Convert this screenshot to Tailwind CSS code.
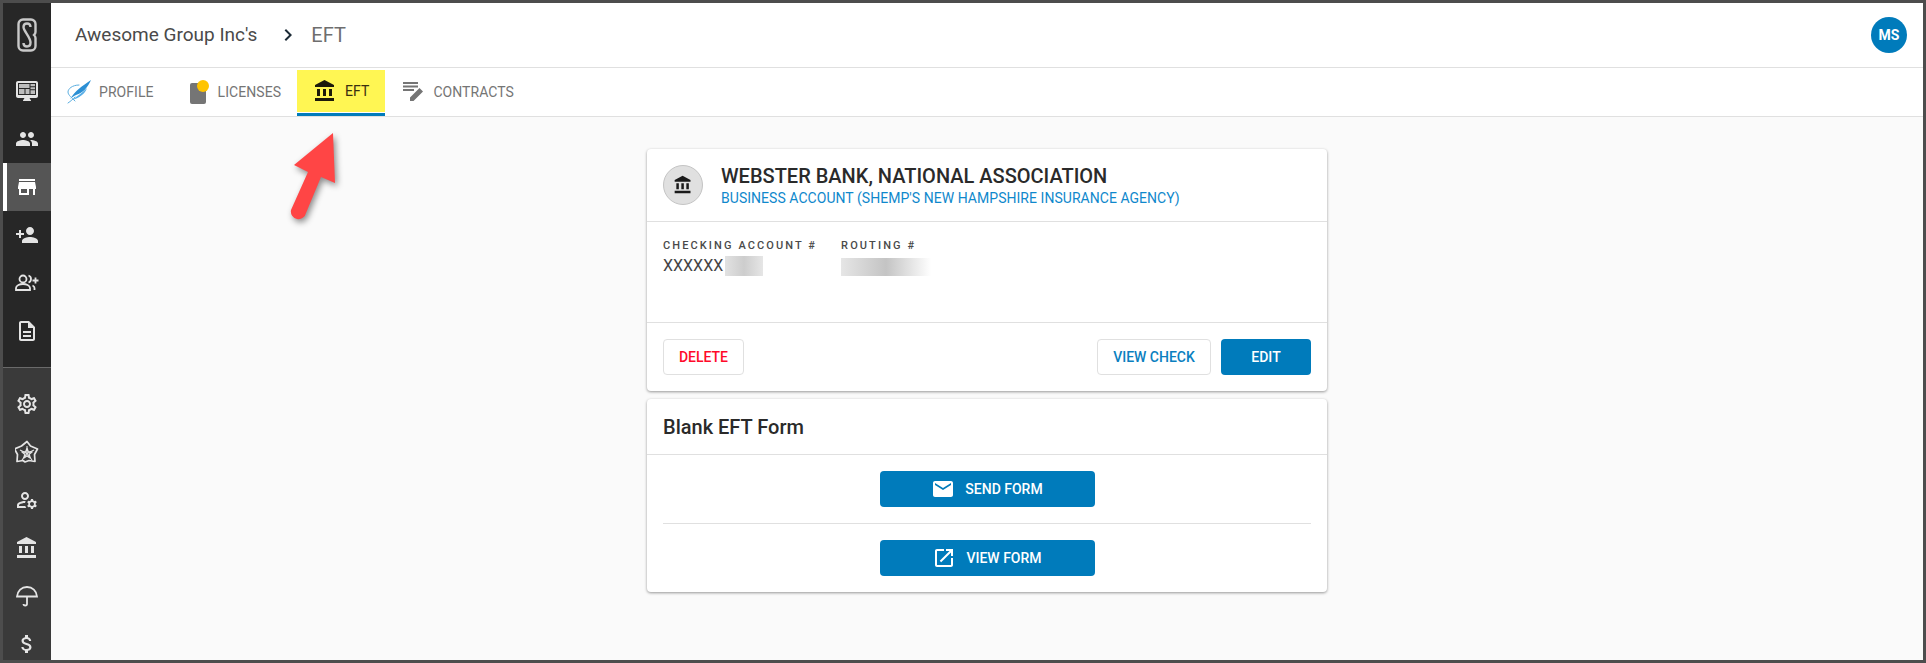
<!DOCTYPE html>
<html lang="en">
<head>
  <meta charset="UTF-8">
  <title>EFT</title>
  <meta name="viewport" content="width=device-width, initial-scale=1.0">
  <script src="https://cdn.jsdelivr.net/npm/@tailwindcss/browser@4"></script>
</head>
<body class="h-screen overflow-hidden font-['Roboto',sans-serif]">
  <div class="relative flex h-full border-[3px] border-[#4d4d4d] bg-[#fafafa]">

    <!-- sidebar -->
    <aside class="flex w-12 shrink-0 flex-col overflow-hidden bg-[#3a3a3a] text-[#e4e4e4]">
      <div class="bg-[#272727] pb-3">
        <div class="flex h-[64px] items-center justify-center">
          <svg class="h-[34px] w-[20px]" viewBox="0 0 20 34" fill="none" stroke="#c9c9c9">
            <path stroke-width="2.4" d="M10 1.5H6C3.500 1.500 1.500 3.500 1.500 6V28C1.500 30.500 3.500 32.500 6 32.500H14C16.500 32.500 18.500 30.500 18.500 28V20C18.500 18.500 17.500 17.500 17 17C17.500 16.500 18.500 15.500 18.500 14V6C18.500 3.500 16.500 1.500 14 1.500z"/>
            <path stroke-width="2.4" d="M13.500 9C13.500 6.500 12 5.500 10 5.500C7.500 5.500 6.500 7 6.500 9C6.500 13 13.500 19 13.500 24.500C13.500 27 12 28.500 10 28.500C8 28.500 6.500 27.500 6.500 25"/>
          </svg>
        </div>
        <div class="flex h-12 items-center justify-center">
          <svg class="h-6 w-6" viewBox="0 0 24 24">
            <path fill="currentColor" d="M3 2h18c1.100 0 2 .9 2 2v13c0 1.100-.9 2-2 2h-6.500l1.500 2.500v.5H8v-.5L9.500 19H3c-1.100 0-2-.9-2-2V4c0-1.100.9-2 2-2z"/>
            <path fill="#272727" d="M3 4h18v12H3z"/>
            <path fill="#bdbdbd" d="M4 5h10.500v4H4zM15.500 5H20v2.200h-4.500zM15.500 8.200H20v2h-4.500zM4 10h5.500v5H4zM10.500 10h4v5h-4zM15.500 11.200H20V15h-4.500z"/>
          </svg>
        </div>
        <div class="flex h-12 items-center justify-center">
          <svg class="h-6 w-6" viewBox="0 0 24 24" fill="currentColor"><path d="M16 11c1.660 0 2.990-1.340 2.990-3S17.660 5 16 5c-1.660 0-3 1.340-3 3s1.340 3 3 3zm-8 0c1.660 0 2.990-1.340 2.990-3S9.660 5 8 5C6.340 5 5 6.340 5 8s1.340 3 3 3zm0 2c-2.330 0-7 1.170-7 3.500V19h14v-2.500c0-2.330-4.670-3.500-7-3.500zm8 0c-.29 0-.62.02-.97.05 1.160.84 1.970 1.970 1.970 3.450V19h6v-2.500c0-2.330-4.670-3.500-7-3.500z"/></svg>
        </div>
        <div class="flex h-12 items-center justify-center border-l-4 border-white bg-[#555555] pr-1 text-white">
          <svg class="h-6 w-6" viewBox="0 0 24 24" fill="currentColor"><path d="M20 4H4v2h16V4zm1 10v-2l-1-5H4l-1 5v2h1v6h10v-6h4v6h2v-6h1zm-9 4H6v-4h6v4z"/></svg>
        </div>
        <div class="flex h-12 items-center justify-center">
          <svg class="h-6 w-6" viewBox="0 0 24 24" fill="currentColor"><path d="M15 12c2.210 0 4-1.790 4-4s-1.790-4-4-4-4 1.790-4 4 1.790 4 4 4zm-9-2V7H4v3H1v2h3v3h2v-3h3v-2H6zm9 4c-2.670 0-8 1.340-8 4v2h16v-2c0-2.660-5.330-4-8-4z"/></svg>
        </div>
        <div class="flex h-12 items-center justify-center">
          <svg class="h-6 w-6" viewBox="0 0 24 24" fill="none" stroke="currentColor" stroke-width="1.800">
            <circle cx="8" cy="8" r="3.500"/>
            <path d="M1 19v-2c0-2.500 4-4 7-4s7 1.500 7 4v2z"/>
            <path d="M13.500 4.500c1.500.5 2.500 2 2.500 3.500s-1 3-2.500 3.500M17.500 14.500c1.500.7 2 1.500 2 2.500v2"/>
            <path d="M20.500 6.500v6M17.500 9.500h6"/>
          </svg>
        </div>
        <div class="flex h-12 items-center justify-center">
          <svg class="h-6 w-6" viewBox="0 0 24 24" fill="currentColor"><path d="M8 16h8v2H8zm0-4h8v2H8zm6-10H6c-1.100 0-2 .9-2 2v16c0 1.100.89 2 1.990 2H18c1.100 0 2-.9 2-2V8l-6-6zm4 18H6V4h7v5h5v11z"/></svg>
        </div>
      </div>
      <div class="border-t border-[#6a6a6a] pt-3">
        <div class="flex h-12 items-center justify-center">
          <svg class="h-6 w-6" viewBox="0 0 24 24" fill="currentColor"><path d="M19.430 12.980c.04-.32.07-.64.07-.98 0-.34-.03-.66-.07-.98l2.110-1.650c.19-.15.24-.42.12-.64l-2-3.460c-.09-.16-.26-.25-.44-.25-.06 0-.12.01-.17.03l-2.490 1c-.52-.4-1.080-.73-1.690-.98l-.38-2.650C14.460 2.180 14.250 2 14 2h-4c-.25 0-.46.18-.49.42l-.38 2.650c-.61.25-1.170.59-1.690.98l-2.490-1c-.06-.02-.12-.03-.18-.03-.17 0-.34.09-.43.25l-2 3.460c-.13.22-.07.49.12.64l2.110 1.650c-.04.32-.07.65-.07.98 0 .33.03.66.07.98l-2.110 1.650c-.19.15-.24.42-.12.64l2 3.460c.09.16.26.25.44.25.06 0 .12-.01.17-.03l2.490-1c.52.4 1.080.73 1.690.98l.38 2.650c.03.24.24.42.49.42h4c.25 0 .46-.18.49-.42l.38-2.650c.61-.25 1.170-.59 1.690-.98l2.490 1c.06.02.12.03.18.03.17 0 .34-.09.43-.25l2-3.460c.12-.22.07-.49-.12-.64l-2.110-1.650zm-1.980-1.710c.04.31.05.52.05.73 0 .21-.02.43-.05.73l-.14 1.130.89.7 1.080.84-.7 1.210-1.270-.51-1.040-.42-.9.68c-.43.32-.84.56-1.250.73l-1.060.43-.16 1.130-.2 1.350h-1.400l-.19-1.350-.16-1.130-1.060-.43c-.43-.18-.83-.41-1.230-.71l-.91-.7-1.060.43-1.270.51-.7-1.210 1.080-.84.89-.7-.14-1.130c-.03-.31-.05-.54-.05-.74s.02-.43.05-.73l.14-1.130-.89-.7-1.080-.84.7-1.210 1.270.51 1.040.42.9-.68c.43-.32.84-.56 1.250-.73l1.060-.43.16-1.130.2-1.350h1.390l.19 1.350.16 1.130 1.060.43c.43.18.83.41 1.230.71l.91.7 1.060-.43 1.270-.51.7 1.210-1.070.85-.89.7.14 1.130zM12 8c-2.210 0-4 1.790-4 4s1.790 4 4 4 4-1.790 4-4-1.790-4-4-4zm0 6c-1.100 0-2-.9-2-2s.9-2 2-2 2 .9 2 2-.9 2-2 2z"/></svg>
        </div>
        <div class="flex h-12 items-center justify-center">
          <svg class="h-6 w-6" viewBox="0 0 24 24" fill="none" stroke="currentColor" stroke-width="1.100" stroke-linejoin="round">
            <path stroke-width="1.700" d="M12 1.500l3.500 4.500 7 3-3 5.500.5 7-6-1-4 1.500-2-1.500-6 1 .5-7-3-5.500 7-3z"/>
            <path d="M12 6v7.500M5 10l7 3.500 7-3.500M7 20l5-6.500 5 6.500"/>
            <path stroke-width="1.400" d="M12 8.500l1.300 3.300 3.700.2-2.800 2.300.9 3.500-3.100-2-3.100 2 .9-3.500L7 12l3.700-.2z"/>
          </svg>
        </div>
        <div class="flex h-12 items-center justify-center">
          <svg class="h-6 w-6" viewBox="0 0 24 24" fill="currentColor"><path d="M4 18v-.65c0-.34.16-.66.41-.81C6.100 15.530 8.030 15 10 15c.03 0 .05 0 .08.01.1-.7.3-1.370.59-1.980-.22-.02-.44-.03-.67-.03-2.420 0-4.680.67-6.610 1.820-.88.52-1.390 1.500-1.390 2.530V20h9.260c-.42-.6-.75-1.280-.97-2H4zM10 12c2.210 0 4-1.790 4-4s-1.790-4-4-4-4 1.790-4 4 1.790 4 4 4zm0-6c1.100 0 2 .9 2 2s-.9 2-2 2-2-.9-2-2 .9-2 2-2zM20.750 16c0-.22-.03-.42-.06-.63l1.140-1.010-1-1.730-1.450.49c-.32-.27-.68-.48-1.080-.63L18 11h-2l-.3 1.490c-.4.15-.76.36-1.080.63l-1.450-.49-1 1.730 1.140 1.010c-.03.21-.06.41-.06.63s.03.42.06.63l-1.140 1.010 1 1.730 1.450-.49c.32.27.68.48 1.080.63L16 21h2l.3-1.490c.4-.15.76-.36 1.080-.63l1.450.49 1-1.730-1.140-1.010c.03-.21.06-.41.06-.63zM17 18c-1.100 0-2-.9-2-2s.9-2 2-2 2 .9 2 2-.9 2-2 2z"/></svg>
        </div>
        <div class="flex h-12 items-center justify-center">
          <svg class="h-6 w-6" viewBox="0 0 24 24" fill="currentColor"><path d="M4 10v7h3v-7H4zm6 0v7h3v-7h-3zM2 22h19v-3H2v3zm14-12v7h3v-7h-3zm-4.500-9L2 6v2h19V6l-9.500-5z"/></svg>
        </div>
        <div class="flex h-12 items-center justify-center">
          <svg class="h-6 w-6" viewBox="0 0 24 24" fill="none" stroke="currentColor" stroke-width="1.800">
            <path d="M2 12.500C2.500 7 6.500 3 12 3s9.500 4 10 9.500z"/>
            <path d="M12 12.500V20c0 2-3.500 2-3.500 0"/>
          </svg>
        </div>
        <div class="flex h-12 items-center justify-center">
          <svg class="h-6 w-6" viewBox="0 0 24 24" fill="currentColor"><path d="M11.800 10.900c-2.270-.59-3-1.200-3-2.150 0-1.090 1.010-1.850 2.700-1.850 1.780 0 2.440.85 2.500 2.100h2.210c-.07-1.720-1.120-3.300-3.210-3.810V3h-3v2.160c-1.940.42-3.500 1.680-3.500 3.610 0 2.310 1.910 3.460 4.700 4.130 2.500.6 3 1.480 3 2.410 0 .69-.49 1.790-2.700 1.790-2.060 0-2.870-.92-2.980-2.100h-2.200c.12 2.190 1.760 3.420 3.680 3.830V21h3v-2.150c1.950-.37 3.500-1.500 3.500-3.550 0-2.840-2.430-3.810-4.700-4.400z"/></svg>
        </div>
      </div>
    </aside>

    <div class="flex min-w-0 flex-1 flex-col">
      <!-- top bar -->
      <header class="flex h-[65px] shrink-0 items-center border-b border-[#e0e0e0] bg-white pl-6 pr-4">
        <span class="text-[19px] text-[#4a4a4a]">Awesome Group Inc's</span>
        <svg class="ml-[19px] h-6 w-6 text-[#1c2b36]" viewBox="0 0 24 24" fill="currentColor"><path d="M10 6L8.590 7.410 13.170 12l-4.580 4.590L10 18l6-6z"/></svg>
        <span class="ml-[11px] text-[20px] text-[#6e6e6e]">EFT</span>
        <div class="ml-auto flex h-9 w-9 items-center justify-center rounded-full bg-[#007bbb] text-[14px] font-bold text-white">MS</div>
      </header>

      <!-- tabs -->
      <nav class="flex h-[49px] shrink-0 border-b border-[#e0e0e0] bg-white text-[14px] tracking-[0.06px] text-[#757575]">
        <a class="flex items-center gap-2 px-4">
          <svg class="h-6 w-6" viewBox="0 0 24 24" fill="none" stroke-linecap="round">
            <path fill="#2b8fd4" d="M3 19C8 11 15 6 24 0C21 7 16 13 9 15C7 16 5 17 3 19z"/>
            <path fill="#59aee6" d="M5 20C10 16 15 13 20 8C18 14 12 18 5 20z"/>
            <path stroke="#5aaee0" stroke-width="1" d="M12 5C5 5 1 9 1 12c0 3 4 6 7 9"/>
            <path stroke="#5aaee0" stroke-width="1" d="M1 23c3-2 5-4 7-6"/>
          </svg>
          <span>PROFILE</span>
        </a>
        <a class="flex items-center gap-2 px-4">
          <span class="relative block h-6 w-6">
            <span class="absolute left-1 top-[3px] block h-[21px] w-4 rounded-[2px] bg-[#757575]"></span>
            <span class="absolute left-[11px] top-0 block h-3 w-3 rounded-full bg-[#ffc400]"></span>
          </span>
          <span>LICENSES</span>
        </a>
        <a class="flex h-[48px] flex-col border-b-[3px] border-[#007bbb] pt-[2px] text-[#3a2f10]">
          <span class="flex h-[42px] items-center gap-2 bg-[#fff653] px-4">
            <svg class="h-6 w-6 text-[#1d1a0a]" viewBox="0 0 24 24" fill="currentColor"><path d="M4 10v7h3v-7H4zm6 0v7h3v-7h-3zM2 22h19v-3H2v3zm14-12v7h3v-7h-3zm-4.500-9L2 6v2h19V6l-9.500-5z"/></svg>
            <span>EFT</span>
          </span>
        </a>
        <a class="flex items-center gap-2 px-4">
          <svg class="h-6 w-6" viewBox="0 0 24 24" fill="currentColor"><path d="M2 2h15v2H2zM2 5.500h15v2H2zM2 9h11v2H2zM9 17.500L18.500 8l3.500 3.500L12.500 21H9z"/></svg>
          <span>CONTRACTS</span>
        </a>
      </nav>

      <!-- content -->
      <main class="flex flex-1 flex-col items-center gap-2 pt-8">
        <section class="w-[680px] rounded-[4px] bg-white shadow-[0_1px_3px_rgba(0,0,0,0.4)]">
          <div class="flex h-[73px] items-center gap-[18px] border-b border-[#e0e0e0] px-4">
            <div class="flex h-10 w-10 items-center justify-center rounded-full border border-[#c4c4c4] bg-[#e0e0e0]">
              <svg class="h-5 w-5 text-[#1a1a1a]" viewBox="0 0 24 24" fill="currentColor"><path d="M4 10v7h3v-7H4zm6 0v7h3v-7h-3zM2 22h19v-3H2v3zm14-12v7h3v-7h-3zm-4.500-9L2 6v2h19V6l-9.500-5z"/></svg>
            </div>
            <div>
              <div class="text-[20px] font-medium leading-[26px] text-[#2a2a2a]">WEBSTER BANK, NATIONAL ASSOCIATION</div>
              <div class="text-[14px] leading-[18px] tracking-[0.04px] text-[#0f88cc]">BUSINESS ACCOUNT (SHEMP'S NEW HAMPSHIRE INSURANCE AGENCY)</div>
            </div>
          </div>
          <div class="flex h-[101px] gap-6 border-b border-[#e0e0e0] px-4 pt-4">
            <div>
              <div class="text-[11px] font-medium leading-[16px] tracking-[2.1px] text-[#4a4a4a]">CHECKING ACCOUNT #</div>
              <div class="relative text-[16px] leading-[24px] text-[#444444]">XXXXXX
                <span class="absolute left-[62px] top-[2px] block h-5 w-[38px] bg-gradient-to-r from-[#e2e2e2] via-[#cdcdcd] to-[#e6e6e6]"></span>
              </div>
            </div>
            <div>
              <div class="text-[11px] font-medium leading-[16px] tracking-[2.1px] text-[#4a4a4a]">ROUTING #</div>
              <div class="relative h-6 w-[90px]">
                <span class="absolute left-0 top-1 block h-[18px] w-[90px] bg-gradient-to-r from-[#e6e6e6] via-[#c4c4c4] to-white"></span>
              </div>
            </div>
          </div>
          <div class="flex h-[68px] items-center gap-[10px] px-4 text-[14px] font-medium">
            <button class="h-9 w-[81px] rounded-[4px] border border-[#e0e0e0] text-[#ff0a2a]">DELETE</button>
            <button class="ml-auto h-9 w-[114px] rounded-[4px] border border-[#e0e0e0] text-[#0b7fbf]">VIEW CHECK</button>
            <button class="h-9 w-[90px] rounded-[4px] bg-[#007bbb] text-white">EDIT</button>
          </div>
        </section>

        <section class="w-[680px] rounded-[4px] bg-white shadow-[0_1px_3px_rgba(0,0,0,0.4)]">
          <div class="flex h-[56px] items-center border-b border-[#e0e0e0] px-4 text-[20px] font-medium text-[#2a2a2a]">Blank EFT Form</div>
          <div class="px-4 text-[14px] font-medium text-white">
            <div class="flex h-[69px] items-center justify-center border-b border-[#e0e0e0]">
              <button class="flex h-9 w-[215px] items-center justify-center gap-[10px] rounded-[4px] bg-[#007bbb]">
                <svg class="h-6 w-6" viewBox="0 0 24 24" fill="currentColor"><path d="M20 4H4c-1.100 0-1.990.9-1.990 2L2 18c0 1.100.9 2 2 2h16c1.100 0 2-.9 2-2V6c0-1.100-.9-2-2-2zm0 4l-8 5-8-5V6l8 5 8-5v2z"/></svg>
                <span>SEND FORM</span>
              </button>
            </div>
            <div class="flex h-[68px] items-center justify-center">
              <button class="flex h-9 w-[215px] items-center justify-center gap-[10px] rounded-[4px] bg-[#007bbb]">
                <svg class="h-6 w-6" viewBox="0 0 24 24" fill="currentColor"><path d="M19 19H5V5h7V3H5c-1.110 0-2 .9-2 2v14c0 1.100.89 2 2 2h14c1.100 0 2-.9 2-2v-7h-2v7zM14 3v2h3.590l-9.830 9.830 1.410 1.410L19 6.410V10h2V3h-7z"/></svg>
                <span>VIEW FORM</span>
              </button>
            </div>
          </div>
        </section>
      </main>
    </div>

    <!-- annotation arrow over the page -->
    <svg class="absolute left-[270px] top-[120px] h-[110px] w-[90px] drop-shadow-[2px_3px_3px_rgba(0,0,0,0.45)]" viewBox="0 0 90 110">
      <path fill="#ff4545" d="M60 10L21 42l14 7-17 38a6 6 0 0 0 15 3l15-36 14 6z"/>
    </svg>
  </div>
</body>
</html>
